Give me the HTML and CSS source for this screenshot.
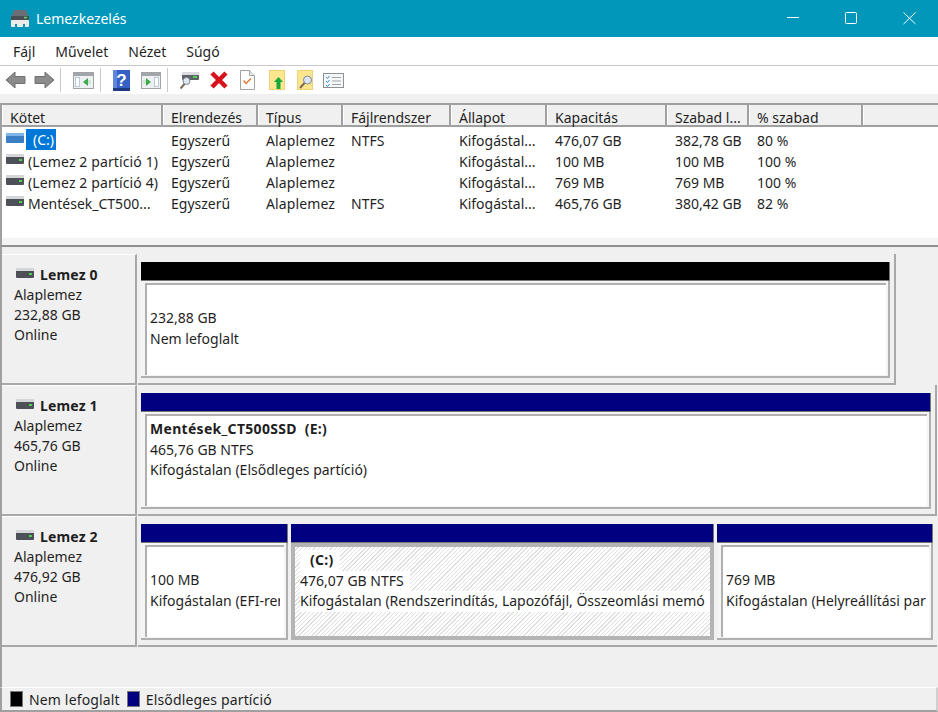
FILE: index.html
```html
<!DOCTYPE html>
<html lang="hu">
<head>
<meta charset="utf-8">
<title>Lemezkezelés</title>
<link rel="stylesheet" href="styles.css">
</head>
<body>
<div class="window">
  <header class="titlebar">
    <svg class="appicon" width="20" height="20" viewBox="0 0 20 20"><path d="M4 1h12l3 7H1z" fill="#6a6f75"/><rect x="1" y="7" width="18" height="4" fill="#4a4e54"/><rect x="14" y="7.800" width="3" height="1.600" fill="#5fd35f"/><path d="M2 11h16a1 1 0 0 1 1 1v5a1 1 0 0 1-1 1h-3v-3h-2v3H7v-3H5v3H2a1 1 0 0 1-1-1v-5a1 1 0 0 1 1-1z" fill="#ecebe8"/></svg>
    <span class="apptitle">Lemezkezelés</span>
    <div class="winbtns">
      <svg width="58" height="37" viewBox="0 0 58 37"><path d="M23 17.500h12" stroke="#fff" fill="none"/></svg>
      <svg width="58" height="37" viewBox="0 0 58 37"><rect x="23.500" y="12.500" width="11" height="11" rx="1" stroke="#fff" fill="none"/></svg>
      <svg width="58" height="37" viewBox="0 0 58 37"><path d="M23.500 12.500l12 11.500M35.500 12.500l-12 11.500" stroke="#fff" fill="none"/></svg>
    </div>
  </header>
  <nav class="menubar"><span>Fájl</span><span>Művelet</span><span>Nézet</span><span>Súgó</span></nav>
  <div class="toolbar">
    <svg class="tb mr8 ml5" width="21" height="18" viewBox="0 0 21 18"><path d="M1 9l9-8v4.500h10v7H10V17z" fill="#8c8c8c" stroke="#707070"/></svg>
    <svg class="tb mr5" width="21" height="18" viewBox="0 0 21 18"><path d="M20 9l-9-8v4.500H1v7h10V17z" fill="#8c8c8c" stroke="#707070"/></svg>
    <i class="sep"></i>
    <svg class="tb mr6" width="21" height="17" viewBox="0 0 21 17"><rect x=".5" y=".5" width="20" height="16" fill="#eef0f2" stroke="#a0a4a8"/><rect x="1" y="1" width="19" height="3" fill="#a2a6aa"/><rect x="2.500" y="5.500" width="4" height="9" fill="#fff" stroke="#9fb6cf" stroke-width=".7"/><path d="M15 6v8l-5-4z" fill="#3fa84a"/><rect x="15" y="8" width="3" height="4" fill="#cfe6d2"/></svg>
    <i class="sep"></i>
    <svg class="tb mr11" width="17" height="21" viewBox="0 0 17 21"><rect width="17" height="21" fill="#3560c4"/><path d="M0 0h4v21H0z" fill="#5f86dc"/><rect y="18" width="17" height="3" fill="#1e3a80"/><text x="8.500" y="16" class="qmark">?</text></svg>
    <svg class="tb mr6" width="20" height="17" viewBox="0 0 20 17"><rect x=".5" y=".5" width="19" height="16" fill="#eef0f2" stroke="#a0a4a8"/><rect x="1" y="1" width="18" height="3" fill="#a2a6aa"/><rect x="13.500" y="5.500" width="4" height="9" fill="#fff" stroke="#9fb6cf" stroke-width=".7"/><path d="M5 6v8l5-4z" fill="#3fa84a"/><rect x="2" y="8" width="3" height="4" fill="#cfe6d2"/></svg>
    <i class="sep"></i>
    <svg class="tb mr11" width="19" height="20" viewBox="0 0 19 20"><rect x="2" y="3" width="17" height="7" rx="1" fill="#5d6268"/><rect x="2" y="2" width="17" height="3" fill="#dcdcdc"/><rect x="13" y="6" width="4" height="2" fill="#4fd34f"/><circle cx="6.500" cy="11" r="3.500" fill="#dfe8f2" stroke="#7b8690"/><path d="M4.500 14l-4 4.500" stroke="#7b6a55" stroke-width="2"/></svg>
    <svg class="tb mr12" width="18" height="18" viewBox="0 0 18 18"><path d="M2 2l14 14M16 2L2 16" stroke="#d8121c" stroke-width="4.500"/></svg>
    <svg class="tb mr14" width="15" height="20" viewBox="0 0 15 20"><path d="M.5.5h9l5 5v14H.5z" fill="#fdfdfd" stroke="#a2a2a2"/><path d="M9.500.5v5h5" fill="#e8e8e8" stroke="#a2a2a2"/><path d="M3.500 10.500l2.500 3 5-5" fill="none" stroke="#e07b3c" stroke-width="1.500"/></svg>
    <svg class="tb mr12" width="16" height="20" viewBox="0 0 16 20"><rect x=".5" y=".5" width="15" height="19" fill="#fde68d" stroke="#ecd27a"/><path d="M14 12l-4.500-5L5 12h2.500v7h4v-7z" fill="#18a93a"/></svg>
    <svg class="tb mr10" width="16" height="20" viewBox="0 0 16 20"><rect x=".5" y=".5" width="15" height="19" fill="#fde68d" stroke="#ecd27a"/><circle cx="10.500" cy="10" r="4" fill="#dbe6f2" stroke="#7f8a95"/><path d="M7.500 13l-4.500 5" stroke="#7b6a55" stroke-width="2"/></svg>
    <svg class="tb" width="21" height="15" viewBox="0 0 21 15"><rect x=".5" y=".5" width="20" height="14" fill="#f6f7f8" stroke="#8d9196"/><path d="M3 4l1.500 1.500L6.500 3M3 8l1.500 1.500L6.500 7M3 12l1.500 1.500L6.500 11" stroke="#2f8fd6" fill="none"/><path d="M9 4.500h9M9 8h9M9 11.500h9" stroke="#a0a4a8"/></svg>
  </div>
  <div class="listpane">
    <div class="lhead">
      <span class="c1">Kötet</span><span class="c2">Elrendezés</span><span class="c3">Típus</span><span class="c4">Fájlrendszer</span><span class="c5">Állapot</span><span class="c6">Kapacitás</span><span class="c7">Szabad l...</span><span class="c8">% szabad</span><span class="c9"></span>
    </div>
    <div class="lrow">
      <div class="c1 cell"><svg class="dk" width="18" height="10" viewBox="0 0 18 10"><rect y="1" width="18" height="9" rx="1" fill="#3a7fc4"/><rect y="0" width="18" height="3" fill="#7fb4e6"/></svg><b class="sel">(C:)</b></div>
      <div class="c2 cell">Egyszerű</div><div class="c3 cell wide">Alaplemez</div><div class="c4 cell">NTFS</div><div class="c5 cell">Kifogástal...</div><div class="c6 cell">476,07 GB</div><div class="c7 cell">382,78 GB</div><div class="c8 cell">80 %</div>
    </div>
    <div class="lrow">
      <div class="c1 cell"><svg class="dk" width="18" height="10" viewBox="0 0 18 10"><use href="#hd"/></svg><span class="wide">(Lemez 2 partíció 1)</span></div>
      <div class="c2 cell">Egyszerű</div><div class="c3 cell wide">Alaplemez</div><div class="c4 cell"></div><div class="c5 cell">Kifogástal...</div><div class="c6 cell">100 MB</div><div class="c7 cell">100 MB</div><div class="c8 cell">100 %</div>
    </div>
    <div class="lrow">
      <div class="c1 cell"><svg class="dk" width="18" height="10" viewBox="0 0 18 10"><use href="#hd"/></svg><span class="wide">(Lemez 2 partíció 4)</span></div>
      <div class="c2 cell">Egyszerű</div><div class="c3 cell wide">Alaplemez</div><div class="c4 cell"></div><div class="c5 cell">Kifogástal...</div><div class="c6 cell">769 MB</div><div class="c7 cell">769 MB</div><div class="c8 cell">100 %</div>
    </div>
    <div class="lrow">
      <div class="c1 cell"><svg class="dk" width="18" height="10" viewBox="0 0 18 10"><use href="#hd"/></svg>Mentések_CT500...</div>
      <div class="c2 cell">Egyszerű</div><div class="c3 cell wide">Alaplemez</div><div class="c4 cell">NTFS</div><div class="c5 cell">Kifogástal...</div><div class="c6 cell">465,76 GB</div><div class="c7 cell">380,42 GB</div><div class="c8 cell">82 %</div>
    </div>
    <div class="lstrip"></div>
  </div>
  <div class="diskpane">
    <section class="disk">
      <div class="dlabel">
        <div class="dname"><svg width="18" height="10" viewBox="0 0 18 10"><use href="#hd"/></svg><b>Lemez 0</b></div>
        <div>Alaplemez</div><div>232,88 GB</div><div>Online</div>
      </div>
      <div class="dvols d0">
        <div class="vol grow">
          <div class="bar black"></div>
          <div class="vbody"><div class="vinner"><div class="lbl-space"></div><div>232,88 GB</div><div>Nem lefoglalt</div></div></div>
        </div>
      </div>
    </section>
    <section class="disk">
      <div class="dlabel">
        <div class="dname"><svg width="18" height="10" viewBox="0 0 18 10"><use href="#hd"/></svg><b>Lemez 1</b></div>
        <div>Alaplemez</div><div>465,76 GB</div><div>Online</div>
      </div>
      <div class="dvols d1">
        <div class="vol grow">
          <div class="bar navy"></div>
          <div class="vbody"><div class="vinner"><div class="vname">Mentések_CT500SSD&nbsp; (E:)</div><div>465,76 GB NTFS</div><div>Kifogástalan (Elsődleges partíció)</div></div></div>
        </div>
      </div>
    </section>
    <section class="disk">
      <div class="dlabel">
        <div class="dname"><svg width="18" height="10" viewBox="0 0 18 10"><use href="#hd"/></svg><b>Lemez 2</b></div>
        <div>Alaplemez</div><div>476,92 GB</div><div>Online</div>
      </div>
      <div class="dvols d2">
        <div class="vol p1">
          <div class="bar navy"></div>
          <div class="vbody"><div class="vinner"><div class="lbl-space"></div><div>100 MB</div><div>Kifogástalan (EFI-re<span class="tail">r</span></div></div></div>
        </div>
        <div class="vol p2">
          <div class="bar navy"></div>
          <div class="vbody hatch-wrap"><div class="vinner hatch"><div class="vname"><span class="cname">(C:)</span></div><div><span>476,07 GB NTFS</span></div><div><span>Kifogástalan (Rendszerindítás, Lapozófájl, Összeomlási memó</span></div></div></div>
        </div>
        <div class="vol p3">
          <div class="bar navy"></div>
          <div class="vbody"><div class="vinner"><div class="lbl-space"></div><div>769 MB</div><div>Kifogástalan (Helyreállítási par</div></div></div>
        </div>
      </div>
    </section>
  </div>
  <footer class="legend">
    <i class="swatch black"></i><span class="legtext first">Nem lefoglalt</span><i class="swatch navy"></i><span class="legtext">Elsődleges partíció</span>
  </footer>
</div>
<svg class="defs" width="0" height="0"><defs><g id="hd"><rect y="2" width="18" height="8" rx="1" fill="#4d5157"/><rect y="0" width="18" height="3" fill="#d5d6d7"/><rect x="13" y="5" width="3" height="2" fill="#52cf52"/></g></defs></svg>
</body>
</html>
```
FILE: styles.css
```css
* { box-sizing: border-box; }
html, body { margin: 0; padding: 0; }
body { width: 938px; height: 712px; overflow: hidden; font-family: "Noto Sans", "Open Sans", sans-serif; font-size: 14px; color: #1f1f1f; background: #f0f0f0; }
.window { width: 938px; height: 712px; display: flex; flex-direction: column; }
.defs { display: block; }
.titlebar { height: 37px; background: #0097bb; color: #fff; display: flex; align-items: center; padding-left: 10px; flex: none; }
.apptitle { margin-left: 6px; font-size: 14px; }
.winbtns { margin-left: auto; display: flex; }
.winbtns svg { display: block; }
.menubar { height: 29px; background: #fff; border-bottom: 1px solid #c8c8cc; display: flex; align-items: center; padding-left: 13px; gap: 20px; flex: none; }
.menubar span { display: block; }
.toolbar { height: 28px; background: #fff; display: flex; align-items: center; flex: none; }
.tb { flex: none; display: block; }
.ml5 { margin-left: 5px; }
.mr5 { margin-right: 5px; } .mr6 { margin-right: 6px; } .mr8 { margin-right: 8px; } .mr10 { margin-right: 10px; } .mr11 { margin-right: 11px; } .mr12 { margin-right: 12px; } .mr14 { margin-right: 14px; }
.sep { width: 1px; height: 24px; background: #c9c9c9; margin-right: 12px; flex: none; }
.qmark { font: bold 17px "Liberation Sans", sans-serif; fill: #fff; text-anchor: middle; }
.listpane { height: 144px; margin-top: 9px; border-top: 2px solid #a0a0a0; border-left: 2px solid #a0a0a0; border-bottom: 2px solid #8f8f8f; background: #fff; flex: none; display: flex; flex-direction: column; }
.lstrip { margin-top: auto; height: 7px; background: #f4f4f4; flex: none; }
.lhead { display: flex; height: 22px; background: #f0f0f0; border-bottom: 2px solid #a0a0a0; flex: none; }
.lhead span { display: block; height: 20px; padding-left: 7px; border-right: 2px solid #a0a0a0; border-left: 1px solid #fff; line-height: 25px; flex: none; }
.lhead .c1 { padding-left: 7px; }
.lhead .c9 { flex: 1; border-right: none; }
.c1 { width: 161px; } .c2 { width: 95px; } .c3 { width: 85px; } .c4 { width: 108px; } .c5 { width: 96px; } .c6 { width: 120px; } .c7 { width: 82px; } .c8 { width: 114px; }
.lrow { display: flex; height: 21px; align-items: center; padding-top: 5px; flex: none; }
.cell { padding-left: 8px; white-space: nowrap; flex: none; }
.lrow .c1 { padding-left: 4px; display: flex; align-items: center; }
.wide { letter-spacing: .12px; }
.dk { margin-right: 4px; margin-top: -4px; flex: none; }
.sel { background: #0078d7; color: #fff; font-weight: 400; padding: 0 2px 0 7px; line-height: 21px; height: 21px; margin-top: -1px; margin-left: -2px; }
.diskpane { height: 440px; padding-top: 7px; border-left: 2px solid #a0a0a0; flex: none; }
.disk { height: 131px; display: flex; }
.dlabel { width: 135px; height: 131px; flex: none; padding: 10px 0 0 12px; background: #f0f0f0; border-top: 1px solid #fff; border-right: 2px solid #a8a8a8; border-bottom: 2px solid #a8a8a8; line-height: 20px; }
.dname { display: flex; align-items: center; gap: 6px; margin-left: 2px; }
.dname svg { margin-top: -4px; }
.dname b { letter-spacing: .15px; }
.dvols { margin-left: 1px; display: flex; height: 131px; padding: 8px 4px 0 3px; border-bottom: 2px solid #a8a8a8; }
.d0 { width: 758px; border-right: 2px solid #a8a8a8; }
.d1 { width: 799px; border-right: 2px solid #a8a8a8; }
.d2 { width: 799px; }
.vol { display: flex; flex-direction: column; min-width: 0; }
.grow { flex: 1; }
.p1 { width: 147px; margin-right: 3px; } .p2 { width: 423px; margin-right: 3px; } .p3 { width: 216px; }
.bar { height: 19px; flex: none; border-right: 1px solid #777; border-bottom: 1px solid #777; }
.black { background: #000; }
.navy { background: #000080; }
.vbody { height: 97px; padding: 2px 2px 1px 4px; background: #f4f4f4; flex: none; border-right: 2px solid #b0b0b0; border-bottom: 2px solid #b0b0b0; }
.vinner { background: #fff; height: 92px; border-top: 2px solid #b0b0b0; border-left: 2px solid #b0b0b0; padding: 3px 0 0 3px; line-height: 20.500px; white-space: nowrap; overflow: hidden; }
.lbl-space { height: 20px; }
.vname { font-weight: 700; letter-spacing: .3px; }
.tail { display: inline-block; width: 3px; overflow: hidden; vertical-align: bottom; }
.hatch-wrap { background: #b4b4b4; padding: 4px; border: none; }
.hatch-wrap .vinner { height: 89px; border: none; padding: 3px 0 0 5px; background: repeating-linear-gradient(135deg, #fff 0 2px, #e0e0e0 2px 3px); }
.hatch span { background: #fff; display: inline-block; padding-right: 6px; }
.hatch .cname { padding-left: 10px; }
.legend { flex: 1; display: flex; align-items: center; padding-left: 8px; border-top: 1px solid #fff; border-bottom: 2px solid #a0a0a0; border-right: 2px solid #d0d0d0; border-left: 2px solid #a0a0a0; min-height: 0; }
.swatch { width: 13px; height: 16px; flex: none; border: 1px solid #777; margin-right: 6px; }
.legtext { letter-spacing: .15px; }
.first { margin-right: 7px; }
```
